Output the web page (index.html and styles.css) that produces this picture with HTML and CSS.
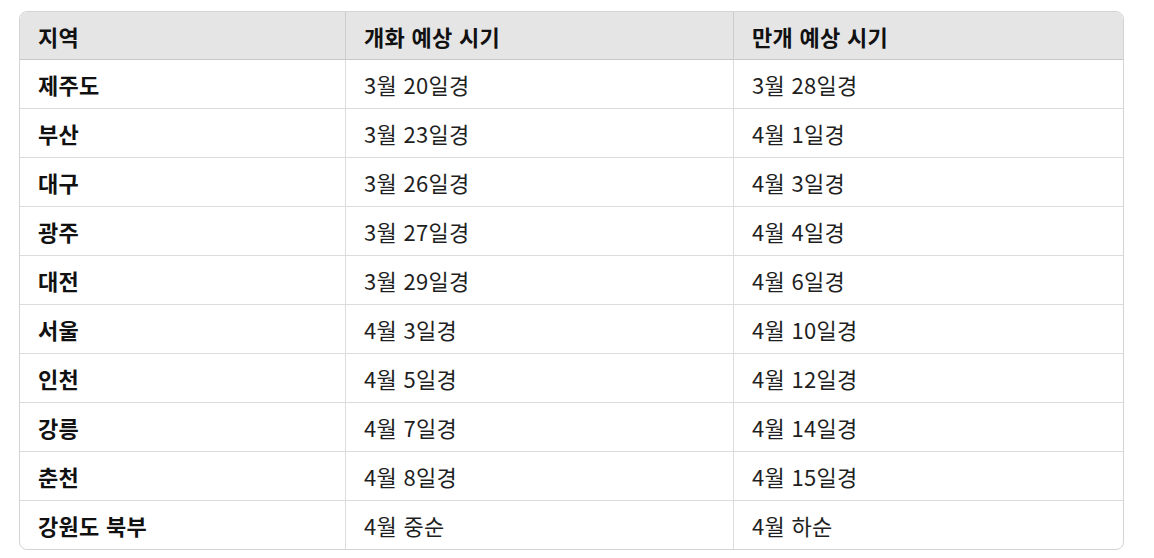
FILE: index.html
```html
<!DOCTYPE html>
<html lang="ko">
<head>
<meta charset="utf-8">
<link rel="stylesheet" href="styles.css">
</head>
<body>
<div class="wrap">
<table class="bloom">
<colgroup><col class="c1"><col class="c2"><col class="c3"></colgroup>
<thead>
<tr><th>지역</th><th>개화 예상 시기</th><th>만개 예상 시기</th></tr>
</thead>
<tbody>
<tr><td class="region">제주도</td><td>3월 20일경</td><td>3월 28일경</td></tr>
<tr><td class="region">부산</td><td>3월 23일경</td><td>4월 1일경</td></tr>
<tr><td class="region">대구</td><td>3월 26일경</td><td>4월 3일경</td></tr>
<tr><td class="region">광주</td><td>3월 27일경</td><td>4월 4일경</td></tr>
<tr><td class="region">대전</td><td>3월 29일경</td><td>4월 6일경</td></tr>
<tr><td class="region">서울</td><td>4월 3일경</td><td>4월 10일경</td></tr>
<tr><td class="region">인천</td><td>4월 5일경</td><td>4월 12일경</td></tr>
<tr><td class="region">강릉</td><td>4월 7일경</td><td>4월 14일경</td></tr>
<tr><td class="region">춘천</td><td>4월 8일경</td><td>4월 15일경</td></tr>
<tr><td class="region">강원도 북부</td><td>4월 중순</td><td>4월 하순</td></tr>
</tbody>
</table>
</div>
</body>
</html>
```
FILE: styles.css
```css
html, body { margin: 0; padding: 0; background: #fff; }
body { font-family: "Noto Sans CJK KR", "Noto Sans", sans-serif; color: #1f1f1f; }
.wrap { padding: 11px 32px 0 19px; }
.bloom {
  width: 1103px;
  border-collapse: separate;
  border-spacing: 0;
  border: 1px solid #d4d4d4;
  border-radius: 8px;
  overflow: hidden;
  table-layout: fixed;
  font-size: 22px;
  letter-spacing: 0.3px;
}
.c1 { width: 325px; }
.c2 { width: 388px; }
.c3 { width: 390px; }
.bloom th, .bloom td {
  text-align: left;
  padding: 0 0 0 18px;
  height: 48px;
  line-height: 26px;
  border-left: 1px solid #dcdcdc;
  border-top: 1px solid #dcdcdc;
}
.bloom th:first-child, .bloom td:first-child { border-left: none; padding-left: 18px; }
.bloom th {
  background: #e5e5e5;
  font-weight: 700;
  color: #111;
  border-top: none;
  border-left-color: #cccccc;
  border-bottom: 1px solid #c8c8c8;
  height: 47px;
}
.bloom tbody tr:first-child td { border-top: none; }
.bloom td.region { font-weight: 700; color: #111; }
```
